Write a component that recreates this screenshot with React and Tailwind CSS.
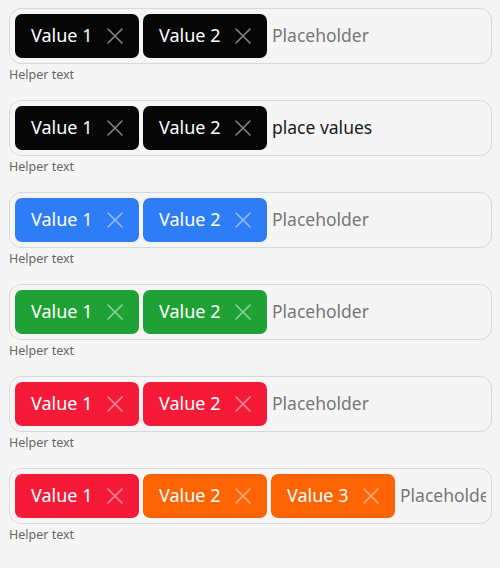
import React from "react";

const X = ({ className }) => (
  <svg width="18" height="18" viewBox="0 0 18 18" className={className} fill="none" stroke="currentColor" strokeWidth="1.6" strokeLinecap="round">
    <path d="M2 2 L16 16 M16 2 L2 16" />
  </svg>
);

const Tag = ({ bg, label }) => (
  <div className={`flex h-[44px] w-[124px] shrink-0 items-center justify-between rounded-[7px] pl-[16px] pr-[15px] text-white ${bg}`}>
    <span className="-translate-y-[1px] text-[18px] leading-[24px]">{label}</span>
    <X className="text-white/50" />
  </div>
);

const Field = ({ tags, text, typed }) => (
  <div className="flex flex-col">
    <div className="flex h-[56px] items-center gap-[4px] overflow-hidden rounded-[12px] border border-[#d9d9d9] p-[5px]">
      {tags.map((t, i) => (
        <Tag key={i} bg={t.bg} label={t.label} />
      ))}
      <div className="min-w-0 flex-1 -translate-y-[1px] overflow-hidden whitespace-nowrap pl-[1px] text-[17.5px] leading-[26px]">
        <span className={typed ? "text-[#1a1a1a]" : "text-[#777777]"}>{text}</span>
      </div>
    </div>
    <div className="mt-[4px] h-[32px] text-[12.5px] leading-[14px] text-[#666666]">Helper text</div>
  </div>
);

export default function App() {
  const black = "bg-[#060606]";
  const blue = "bg-[#2e7cf6]";
  const green = "bg-[#1fa136]";
  const red = "bg-[#f51b38]";
  const orange = "bg-[#fd6404]";
  const two = (c1, c2) => [
    { bg: c1, label: "Value 1" },
    { bg: c2, label: "Value 2" },
  ];
  return (
    <div
      className="min-h-[568px] w-[500px] bg-[#f5f5f5] pl-[9px] pr-[8px] pt-[8px]"
      style={{ fontFamily: '"Noto Sans", "Open Sans", sans-serif' }}
    >
      <Field tags={two(black, black)} text="Placeholder" />
      <Field tags={two(black, black)} text="place values" typed />
      <Field tags={two(blue, blue)} text="Placeholder" />
      <Field tags={two(green, green)} text="Placeholder" />
      <Field tags={two(red, red)} text="Placeholder" />
      <Field
        tags={[
          { bg: red, label: "Value 1" },
          { bg: orange, label: "Value 2" },
          { bg: orange, label: "Value 3" },
        ]}
        text="Placeholder"
      />
    </div>
  );
}
